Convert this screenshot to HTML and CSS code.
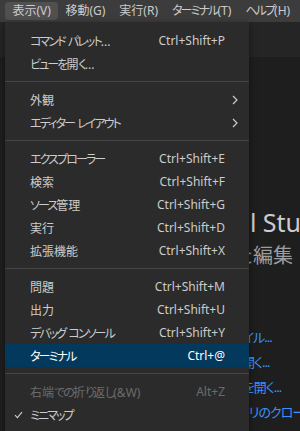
FILE: index.html
```html
<!DOCTYPE html>
<html lang="ja">
<head>
    <meta charset="UTF-8">
    <meta name="viewport" content="width=device-width, initial-scale=1.0">
    <title>表示メニュー</title>
    <link rel="stylesheet" href="styles.css">
</head>
<body>

<div class="window">
    <div class="menubar">
        <span class="menubar-item active">表示(V)</span>
        <span class="menubar-item">移動(G)</span>
        <span class="menubar-item">実行(R)</span>
        <span class="menubar-item"><span class="kana">ターミナル</span>(T)</span>
        <span class="menubar-item"><span class="kana">ヘルプ</span>(H)</span>
    </div>

    <div class="workbench">
        <div class="tabs"></div>
        <div class="editor">
            <div class="welcome">
                <h1>Visual Studio Code</h1>
                <p class="subtitle">進化した編集</p>
                <h2>開始</h2>
                <ul class="links">
                    <li><a href="#">新しいファイル...</a></li>
                    <li><a href="#">ファイルを開く...</a></li>
                    <li><a href="#">フォルダーを開く...</a></li>
                    <li><a href="#">Git リポジトリのクローン...</a></li>
                </ul>
            </div>
        </div>
    </div>

    <!-- dropdown for 表示(V) -->
    <div class="menu">
        <div class="menu-item"><span class="check"></span><span class="label"><span class="kana">コマンド</span> <span class="kana">パレット</span>...</span><span class="keys">Ctrl+Shift+P</span><span class="sub"></span></div>
        <div class="menu-item"><span class="check"></span><span class="label"><span class="kana">ビューを</span>開<span class="kana">く</span>...</span><span class="keys"></span><span class="sub"></span></div>
        <div class="separator"></div>
        <div class="menu-item"><span class="check"></span><span class="label">外観</span><span class="keys"></span>
            <span class="sub"><svg width="6" height="10" viewBox="0 0 6 10"><path d="M1 1l4 4-4 4" fill="none" stroke="#cccccc" stroke-width="1.2"/></svg></span></div>
        <div class="menu-item"><span class="check"></span><span class="label"><span class="kana">エディター</span> <span class="kana">レイアウト</span></span><span class="keys"></span>
            <span class="sub"><svg width="6" height="10" viewBox="0 0 6 10"><path d="M1 1l4 4-4 4" fill="none" stroke="#cccccc" stroke-width="1.2"/></svg></span></div>
        <div class="separator"></div>
        <div class="menu-item"><span class="check"></span><span class="label"><span class="kana">エクスプローラー</span></span><span class="keys">Ctrl+Shift+E</span><span class="sub"></span></div>
        <div class="menu-item"><span class="check"></span><span class="label">検索</span><span class="keys">Ctrl+Shift+F</span><span class="sub"></span></div>
        <div class="menu-item"><span class="check"></span><span class="label"><span class="kana">ソース</span>管理</span><span class="keys">Ctrl+Shift+G</span><span class="sub"></span></div>
        <div class="menu-item"><span class="check"></span><span class="label">実行</span><span class="keys">Ctrl+Shift+D</span><span class="sub"></span></div>
        <div class="menu-item"><span class="check"></span><span class="label">拡張機能</span><span class="keys">Ctrl+Shift+X</span><span class="sub"></span></div>
        <div class="separator"></div>
        <div class="menu-item"><span class="check"></span><span class="label">問題</span><span class="keys">Ctrl+Shift+M</span><span class="sub"></span></div>
        <div class="menu-item"><span class="check"></span><span class="label">出力</span><span class="keys">Ctrl+Shift+U</span><span class="sub"></span></div>
        <div class="menu-item"><span class="check"></span><span class="label"><span class="kana">デバッグ</span> <span class="kana">コンソール</span></span><span class="keys">Ctrl+Shift+Y</span><span class="sub"></span></div>
        <div class="menu-item selected"><span class="check"></span><span class="label"><span class="kana">ターミナル</span></span><span class="keys">Ctrl+@</span><span class="sub"></span></div>
        <div class="separator"></div>
        <div class="menu-item disabled"><span class="check"></span><span class="label">右端<span class="kana">での</span>折<span class="kana">り</span>返<span class="kana">し</span>(&amp;W)</span><span class="keys">Alt+Z</span><span class="sub"></span></div>
        <div class="menu-item"><span class="check"><svg width="9" height="8" viewBox="0 0 9 8"><path d="M1 4.2l2.4 2.4L8 1.2" fill="none" stroke="#cccccc" stroke-width="1.1"/></svg></span><span class="label"><span class="kana">ミニマップ</span></span><span class="keys"></span><span class="sub"></span></div>
    </div>
</div>

</body>
</html>
```

FILE: styles.css
```css
:root {
    --titlebar-bg: #3c3c3c;
    --menu-bg: #2b2b2b;
    --editor-bg: #1e1e1e;
    --tabs-bg: #252526;
    --text-color: #cccccc;
    --link-color: #3794ff;
    --select-bg: #04395e;
}
body {
    font-family: "Noto Sans", "Noto Sans CJK JP", sans-serif;
    margin: 0;
    padding: 0;
    background-color: var(--editor-bg);
    color: var(--text-color);
    overflow: hidden;
}
.window {
    position: relative;
    width: 300px;
    height: 431px;
    display: flex;
    flex-direction: column;
    overflow: hidden;
}
/* katakana/hiragana runs are narrower in the original UI font */
.kana {
    letter-spacing: -1.9px;
}
.menubar {
    height: 22px;
    flex-shrink: 0;
    display: flex;
    align-items: center;
    padding-left: 5px;
    background-color: var(--titlebar-bg);
    font-size: 12px;
    white-space: nowrap;
    font-feature-settings: "palt";
}
.menubar-item {
    height: 18px;
    line-height: 18px;
    padding: 0 7px;
    border-radius: 4px;
}
.menubar-item.active {
    background-color: #505050;
    padding: 0 7.5px;
}
.workbench {
    flex: 1;
    display: flex;
    flex-direction: column;
}
.tabs {
    height: 35px;
    background-color: var(--tabs-bg);
}
.editor {
    flex: 1;
    background-color: var(--editor-bg);
    padding-left: 173px;
    white-space: nowrap;
}
.welcome h1 {
    margin: 150px 0 0 14px;
    font-size: 25px;
    line-height: 30px;
    font-weight: normal;
    color: var(--text-color);
}
.welcome .subtitle {
    margin: 7px 0 0;
    font-size: 20px;
    line-height: 24px;
    color: #9d9d9d;
}
.welcome h2 {
    margin: 20px 0 0;
    font-size: 16px;
    line-height: 24px;
    font-weight: normal;
}
.links {
    list-style: none;
    margin: 13px 0 0 17px;
    padding: 0;
    font-size: 13px;
    line-height: 25px;
    letter-spacing: -1px;
    font-feature-settings: "palt";
}
.links a {
    color: var(--link-color);
    text-decoration: none;
}
.menu {
    position: absolute;
    top: 22px;
    left: 5px;
    width: 244px;
    bottom: -10px;
    padding-top: 7px;
    background-color: var(--menu-bg);
    box-shadow: 0 2px 6px rgba(0, 0, 0, 0.5);
    font-size: 12px;
    font-feature-settings: "palt";
    white-space: nowrap;
}
.menu-item {
    height: 23px;
    display: flex;
    align-items: center;
}
.menu-item .check {
    width: 25px;
    display: flex;
    justify-content: center;
    padding-left: 2px;
    box-sizing: border-box;
}
.menu-item .label {
    flex: 1;
}
.menu-item .keys {
    font-feature-settings: normal;
}
.menu-item .sub {
    width: 24px;
    display: flex;
    justify-content: flex-end;
    padding-right: 11px;
    box-sizing: border-box;
}
.menu-item.selected {
    background-color: var(--select-bg);
    color: #ffffff;
}
.menu-item.disabled {
    color: #6b6b6b;
}
.separator {
    height: 1px;
    margin: 6px 0;
    background-color: #454545;
}
```
